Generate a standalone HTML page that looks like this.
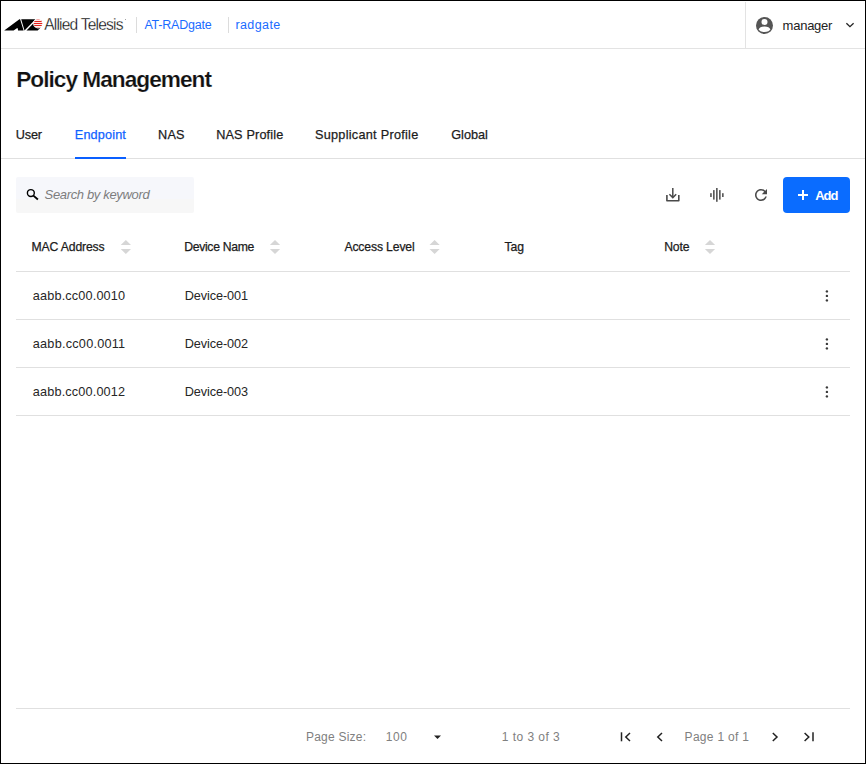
<!DOCTYPE html>
<html><head><meta charset="utf-8"><style>
*{margin:0;padding:0;box-sizing:border-box}
html,body{width:866px;height:764px;overflow:hidden;background:#fff}
body{position:relative;font-family:"Liberation Sans",sans-serif}
.t{position:absolute;white-space:nowrap;line-height:normal}
.bm{display:inline-block;width:0;height:0}
.a{position:absolute}
</style></head>
<body>
<div class="s"><!-- header -->
<div class="a" style="left:0;top:48px;width:866px;height:1px;background:#e3e3e3"></div>
<div class="a" style="left:745px;top:2px;width:1px;height:46px;background:#e3e3e3"></div>
<div class="a" style="left:136px;top:17px;width:1px;height:16px;background:#dcdcdc"></div>
<div class="a" style="left:228px;top:17px;width:1px;height:16px;background:#dcdcdc"></div>
<svg class="a" style="left:0;top:0" width="50" height="40" viewBox="0 0 50 40">
  <defs><clipPath id="ball"><circle cx="38" cy="23.5" r="4.25"/></clipPath></defs>
  <path d="M4.2 30.6 L19.4 19.2 L20.1 19.2 L23.6 30.6 L18 30.6 L17.8 28.3 L16.9 28.3 L13.6 30.6 Z" fill="#000"/>
  <path d="M21.2 19.2 L35.5 19.2 L24.5 30.6 Z" fill="#000"/>
  <path d="M26.5 30.6 L36.15 20.6 L42 20.6 L40.2 28.1 L37.7 30.6 Z" fill="#000"/>
  <circle cx="38" cy="23.5" r="4.9" fill="#fff"/>
  <g clip-path="url(#ball)" fill="#e3221b">
    <rect x="33" y="19.1" width="10" height="0.9" opacity="0.6"/>
    <rect x="33" y="20.9" width="10" height="1.1"/>
    <rect x="33" y="22.9" width="10" height="1.1"/>
    <rect x="33" y="24.9" width="10" height="1.1"/>
    <rect x="33" y="26.9" width="10" height="0.9" opacity="0.6"/>
  </g>
</svg>
<svg class="a" style="left:754px;top:15px" width="21" height="21" viewBox="0 0 21 21">
  <circle cx="10.5" cy="10.5" r="8.5" fill="#555"/>
  <circle cx="10.5" cy="6.9" r="3" fill="#fff"/>
  <ellipse cx="10.5" cy="14.3" rx="5.6" ry="2.8" fill="#fff"/>
</svg>
<svg class="a" style="left:844px;top:20px" width="12" height="10" viewBox="0 0 12 10">
  <path d="M2.4 3.3 L5.95 6.7 L9.6 3.3" fill="none" stroke="#222" stroke-width="1.3"/>
</svg>
<div class="a" style="left:124.5px;top:18.5px;width:1.2px;height:1.2px;border-radius:1px;background:#888"></div>
<!-- tabs -->
<div class="a" style="left:0;top:158px;width:866px;height:1px;background:#e0e0e0"></div>
<div class="a" style="left:75px;top:157px;width:51px;height:2px;background:#0a5fff"></div>
<!-- search -->
<div class="a" style="left:16px;top:177px;width:178px;height:36px;background:linear-gradient(#f6f7fb 0,#f6f7fb 22px,#f7f7f7 22px);border-radius:2px"></div>
<svg class="a" style="left:20px;top:182px" width="24" height="24" viewBox="0 0 24 24">
  <circle cx="10.85" cy="11.05" r="3.45" fill="none" stroke="#000" stroke-width="1.4"/>
  <path d="M13.4 13.6 L17.9 17.5" stroke="#000" stroke-width="1.8"/>
</svg>
<!-- toolbar icons -->
<svg class="a" style="left:660px;top:182px" width="24" height="24" viewBox="0 0 24 24">
  <path d="M12.8 6 V15" stroke="#4a4a4a" stroke-width="1.5" fill="none"/>
  <path d="M9.4 12.3 L12.8 15.6 L16.2 12.3" stroke="#4a4a4a" stroke-width="1.5" fill="none"/>
  <path d="M6.9 13 V18.8 H18.8 V13" stroke="#4a4a4a" stroke-width="1.6" fill="none" stroke-linejoin="round"/>
</svg>
<svg class="a" style="left:700px;top:182px" width="30" height="24" viewBox="0 0 30 24">
  <rect x="10.2" y="11.2" width="1.5" height="3.8" fill="#4a4a4a"/>
  <rect x="13.1" y="8.1" width="1.5" height="9.5" fill="#4a4a4a"/>
  <rect x="16.1" y="6" width="1.5" height="13.8" fill="#4a4a4a"/>
  <rect x="19.1" y="8.1" width="1.5" height="9.5" fill="#4a4a4a"/>
  <rect x="22.1" y="11.2" width="1.5" height="3.8" fill="#4a4a4a"/>
</svg>
<svg class="a" style="left:752px;top:186px" width="18" height="18" viewBox="0 0 24 24">
  <path fill="#4a4a4a" d="M17.65 6.35C16.2 4.9 14.21 4 12 4c-4.42 0-7.99 3.58-7.99 8s3.57 8 7.99 8c3.73 0 6.84-2.55 7.73-6h-2.08c-.82 2.33-3.04 4-5.650 4-3.31 0-6-2.69-6-6s2.69-6 6-6c1.66 0 3.14.69 4.22 1.78L13 11h7V4l-2.35 2.35z"/>
</svg>
<!-- add button -->
<div class="a" style="left:783px;top:177px;width:67px;height:36px;background:#0a6cff;border-radius:4px"></div>
<svg class="a" style="left:796px;top:188px" width="14" height="14" viewBox="0 0 14 14">
  <path d="M7 2 V12 M2 7 H12" stroke="#fff" stroke-width="2"/>
</svg>
<!-- table lines -->
<div class="a" style="left:16px;top:271px;width:834px;height:1px;background:#e0e0e0"></div>
<div class="a" style="left:16px;top:319px;width:834px;height:1px;background:#e0e0e0"></div>
<div class="a" style="left:16px;top:367px;width:834px;height:1px;background:#e0e0e0"></div>
<div class="a" style="left:16px;top:415px;width:834px;height:1px;background:#e0e0e0"></div>
<!-- sort icons -->
<svg class="a" style="left:0;top:230px" width="866" height="30" viewBox="0 230 866 30">
  <g fill="#d6d6d6">
    <path d="M120.7 245 L125.85 240 L131 245 Z M120.7 249 L131 249 L125.85 254 Z"/>
    <path d="M269.9 245 L275 240 L280.1 245 Z M269.9 249 L280.1 249 L275 254 Z"/>
    <path d="M429.5 245 L434.6 240 L439.7 245 Z M429.5 249 L439.7 249 L434.6 254 Z"/>
    <path d="M704.9 245 L710 240 L715.1 245 Z M704.9 249 L715.1 249 L710 254 Z"/>
  </g>
</svg>
<!-- kebabs -->
<svg class="a" style="left:820px;top:280px" width="14" height="130" viewBox="820 280 14 130">
  <g fill="#3a3a3a"><circle cx="826.9" cy="291.4" r="1.2"/><circle cx="826.9" cy="295.9" r="1.2"/><circle cx="826.9" cy="300.4" r="1.2"/><circle cx="826.9" cy="339.4" r="1.2"/><circle cx="826.9" cy="343.9" r="1.2"/><circle cx="826.9" cy="348.4" r="1.2"/><circle cx="826.9" cy="387.4" r="1.2"/><circle cx="826.9" cy="391.9" r="1.2"/><circle cx="826.9" cy="396.4" r="1.2"/></g>
</svg>
<!-- footer -->
<div class="a" style="left:16px;top:708px;width:834px;height:1px;background:#e0e0e0"></div>
<svg class="a" style="left:0;top:725px" width="866" height="25" viewBox="0 725 866 25">
  <path d="M434 735.5 L441 735.5 L437.5 739 Z" fill="#222"/>
  <g stroke="#222" stroke-width="1.5" fill="none">
    <path d="M621.5 732.3 V741.3"/>
    <path d="M630 733 L625.8 737 L630 741"/>
    <path d="M662 733 L657.8 737 L662 741"/>
    <path d="M772.8 733 L777 737 L772.8 741"/>
    <path d="M804.6 733 L808.8 737 L804.6 741"/>
    <path d="M813 732.3 V741.3"/>
  </g>
</svg>
<!-- outer border -->
<div class="a" style="left:0;top:0;width:866px;height:764px;border:1px solid #000"></div>
</div>
<div id="t_allied" class="t" style="left:44.20px;top:16.31px;font-size:15.6px;font-weight:400;font-style:normal;color:#000000;letter-spacing:-0.808px;-webkit-text-stroke:0.3px #fff">Allied Telesis<span class="bm"></span></div>
<div id="t_atrad" class="t" style="left:144.40px;top:17.72px;font-size:12.5px;font-weight:400;font-style:normal;color:#1a6bff;letter-spacing:-0.222px">AT-RADgate<span class="bm"></span></div>
<div id="t_radgate" class="t" style="left:235.40px;top:17.50px;font-size:12.5px;font-weight:400;font-style:normal;color:#1a6bff;letter-spacing:0.417px">radgate<span class="bm"></span></div>
<div id="t_manager" class="t" style="left:782.60px;top:17.90px;font-size:13px;font-weight:400;font-style:normal;color:#222222;letter-spacing:-0.250px">manager<span class="bm"></span></div>
<div id="t_title" class="t" style="left:16.20px;top:65.81px;font-size:22.7px;font-weight:700;font-style:normal;color:#111111;letter-spacing:-1.000px;-webkit-text-stroke:0.2px #fff">Policy Management<span class="bm"></span></div>
<div id="t_user" class="t" style="left:15.80px;top:128.22px;font-size:12.7px;font-weight:400;font-style:normal;color:#1c1c1c;letter-spacing:-0.167px;-webkit-text-stroke:0.25px #1c1c1c">User<span class="bm"></span></div>
<div id="t_endpoint" class="t" style="left:74.80px;top:128.22px;font-size:12.7px;font-weight:400;font-style:normal;color:#0f62ff;letter-spacing:0.143px;-webkit-text-stroke:0.25px #0f62ff">Endpoint<span class="bm"></span></div>
<div id="t_nas" class="t" style="left:158.00px;top:128.22px;font-size:12.7px;font-weight:400;font-style:normal;color:#1c1c1c;letter-spacing:0.250px;-webkit-text-stroke:0.25px #1c1c1c">NAS<span class="bm"></span></div>
<div id="t_nasprof" class="t" style="left:216.20px;top:128.22px;font-size:12.7px;font-weight:400;font-style:normal;color:#1c1c1c;letter-spacing:0.150px;-webkit-text-stroke:0.25px #1c1c1c">NAS Profile<span class="bm"></span></div>
<div id="t_supp" class="t" style="left:315.00px;top:128.22px;font-size:12.7px;font-weight:400;font-style:normal;color:#1c1c1c;letter-spacing:0.265px;-webkit-text-stroke:0.25px #1c1c1c">Supplicant Profile<span class="bm"></span></div>
<div id="t_global" class="t" style="left:451.20px;top:128.22px;font-size:12.7px;font-weight:400;font-style:normal;color:#1c1c1c;letter-spacing:0.000px;-webkit-text-stroke:0.25px #1c1c1c">Global<span class="bm"></span></div>
<div id="t_search" class="t" style="left:44.60px;top:186.90px;font-size:13px;font-weight:400;font-style:italic;color:#7d7d7d;letter-spacing:-0.344px">Search by keyword<span class="bm"></span></div>
<div id="t_add" class="t" style="left:815.20px;top:187.60px;font-size:13px;font-weight:700;font-style:normal;color:#ffffff;letter-spacing:-1.000px">Add<span class="bm"></span></div>
<div id="t_h_mac" class="t" style="left:31.60px;top:239.82px;font-size:12.2px;font-weight:400;font-style:normal;color:#1c1c1c;letter-spacing:-0.150px;-webkit-text-stroke:0.25px #1c1c1c">MAC Address<span class="bm"></span></div>
<div id="t_h_dev" class="t" style="left:184.20px;top:239.82px;font-size:12.2px;font-weight:400;font-style:normal;color:#1c1c1c;letter-spacing:-0.300px;-webkit-text-stroke:0.25px #1c1c1c">Device Name<span class="bm"></span></div>
<div id="t_h_acc" class="t" style="left:344.40px;top:239.82px;font-size:12.2px;font-weight:400;font-style:normal;color:#1c1c1c;letter-spacing:-0.136px;-webkit-text-stroke:0.25px #1c1c1c">Access Level<span class="bm"></span></div>
<div id="t_h_tag" class="t" style="left:504.40px;top:239.82px;font-size:12.2px;font-weight:400;font-style:normal;color:#1c1c1c;letter-spacing:0.000px;-webkit-text-stroke:0.25px #1c1c1c">Tag<span class="bm"></span></div>
<div id="t_h_note" class="t" style="left:664.20px;top:239.82px;font-size:12.2px;font-weight:400;font-style:normal;color:#1c1c1c;letter-spacing:-0.167px;-webkit-text-stroke:0.25px #1c1c1c">Note<span class="bm"></span></div>
<div id="t_r1a" class="t" style="left:32.80px;top:288.91px;font-size:12.7px;font-weight:400;font-style:normal;color:#262626;letter-spacing:0.154px">aabb.cc00.0010<span class="bm"></span></div>
<div id="t_r1b" class="t" style="left:184.80px;top:288.91px;font-size:12.7px;font-weight:400;font-style:normal;color:#262626;letter-spacing:-0.111px">Device-001<span class="bm"></span></div>
<div id="t_r2a" class="t" style="left:32.80px;top:336.91px;font-size:12.7px;font-weight:400;font-style:normal;color:#262626;letter-spacing:0.231px">aabb.cc00.0011<span class="bm"></span></div>
<div id="t_r2b" class="t" style="left:184.80px;top:336.91px;font-size:12.7px;font-weight:400;font-style:normal;color:#262626;letter-spacing:-0.111px">Device-002<span class="bm"></span></div>
<div id="t_r3a" class="t" style="left:32.80px;top:384.91px;font-size:12.7px;font-weight:400;font-style:normal;color:#262626;letter-spacing:0.154px">aabb.cc00.0012<span class="bm"></span></div>
<div id="t_r3b" class="t" style="left:184.80px;top:384.91px;font-size:12.7px;font-weight:400;font-style:normal;color:#262626;letter-spacing:-0.111px">Device-003<span class="bm"></span></div>
<div id="t_psize" class="t" style="left:306.00px;top:729.72px;font-size:12px;font-weight:400;font-style:normal;color:#808080;letter-spacing:0.222px">Page Size:<span class="bm"></span></div>
<div id="t_100" class="t" style="left:385.80px;top:729.72px;font-size:12px;font-weight:400;font-style:normal;color:#808080;letter-spacing:0.500px">100<span class="bm"></span></div>
<div id="t_1to3" class="t" style="left:501.80px;top:729.72px;font-size:12px;font-weight:400;font-style:normal;color:#808080;letter-spacing:0.450px">1 to 3 of 3<span class="bm"></span></div>
<div id="t_page" class="t" style="left:684.60px;top:729.72px;font-size:12px;font-weight:400;font-style:normal;color:#808080;letter-spacing:0.300px">Page 1 of 1<span class="bm"></span></div>
</body></html>
